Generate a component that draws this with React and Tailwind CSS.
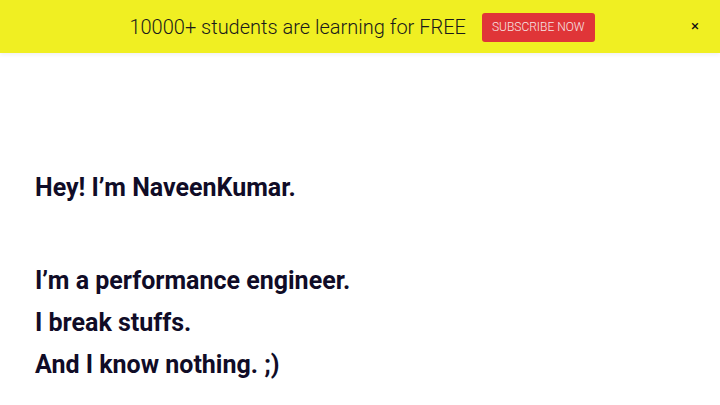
export default function App() {
  return (
    <div className="min-h-[405px] bg-white" style={{ fontFamily: "Roboto, 'Liberation Sans', sans-serif" }}>
      <div className="relative h-[53px] bg-[#f0ef22] shadow-[0_2px_4px_rgba(0,0,0,0.06)] flex items-center justify-center">
        <div className="flex items-center gap-4 ml-[4px]">
          <span className="text-[20px] font-light text-[#1a1a1a] leading-none">10000+ students are learning for FREE</span>
          <button className="h-[29px] px-[10px] mt-[1px] rounded-[3px] bg-[#e03538] text-[12px] font-light text-[#f6e6e6] leading-none">SUBSCRIBE NOW</button>
        </div>
        <span className="absolute right-[21px] top-[19px] text-[15px] leading-none text-[#111]">×</span>
      </div>
      <div className="pt-[114px] pl-[35px] text-[25px] font-bold text-[#100c27] leading-[42px]">
        <p>Hey! I’m NaveenKumar.</p>
        <p className="mt-[51px]">I’m a performance engineer.</p>
        <p>I break stuffs.</p>
        <p>And I know nothing. ;)</p>
      </div>
    </div>
  );
}
